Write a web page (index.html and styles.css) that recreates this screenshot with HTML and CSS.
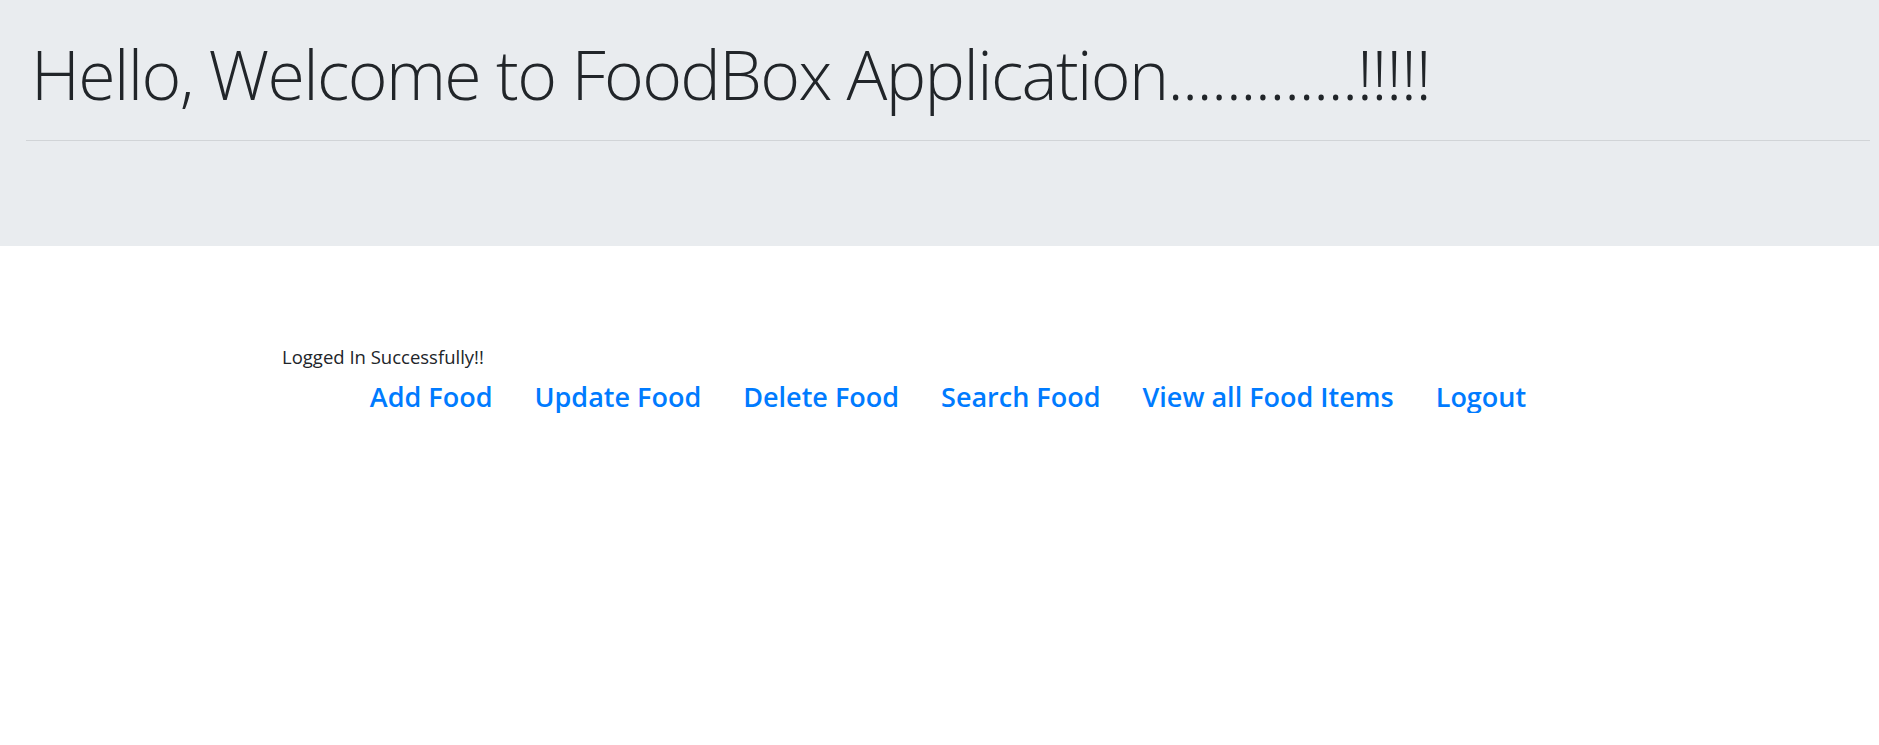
FILE: index.html
```html
<!DOCTYPE html>
<html lang="en">
<head>
<meta charset="utf-8">
<title>FoodBox</title>
<link rel="stylesheet" href="styles.css">
</head>
<body>
<header class="jumbotron">
  <h1 class="display">Hello, Welcome to FoodBox Application.............!!!!!</h1>
  <hr class="rule">
</header>
<main class="content">
  <p class="status">Logged In Successfully!!</p>
  <nav class="menu">
    <a href="#" class="menu-link">Add Food</a>
    <a href="#" class="menu-link">Update Food</a>
    <a href="#" class="menu-link">Delete Food</a>
    <a href="#" class="menu-link">Search Food</a>
    <a href="#" class="menu-link">View all Food Items</a>
    <a href="#" class="menu-link">Logout</a>
  </nav>
</main>
</body>
</html>
```
FILE: styles.css
```css
* { box-sizing: border-box; }
html, body { margin: 0; padding: 0; }
body {
  font-family: "Open Sans", "Noto Sans", sans-serif;
  color: #212529;
  background: #fff;
}
.jumbotron {
  background: #e9ecef;
  height: 246px;
  padding: 33px 9px 0 26px;
}
.display {
  margin: 0;
  padding-left: 5px;
  font-size: 68px;
  font-weight: 300;
  letter-spacing: -1.65px;
  line-height: 1.2;
  color: #212529;
  white-space: nowrap;
}
.rule {
  margin: 25px 0 0;
  border: 0;
  border-top: 1px solid #d1d4d7;
  height: 0;
}
.content {
  padding: 97px 9px 0 26px;
}
.status {
  margin: 0;
  padding-left: 256px;
  font-size: 18.5px;
  line-height: 27px;
}
.menu {
  margin-top: 11px;
  display: flex;
  justify-content: center;
  gap: 42px;
}
.menu-link {
  font-size: 27px;
  line-height: 1.2;
  font-weight: 600;
  color: #007bff;
  text-decoration: none;
}
```
